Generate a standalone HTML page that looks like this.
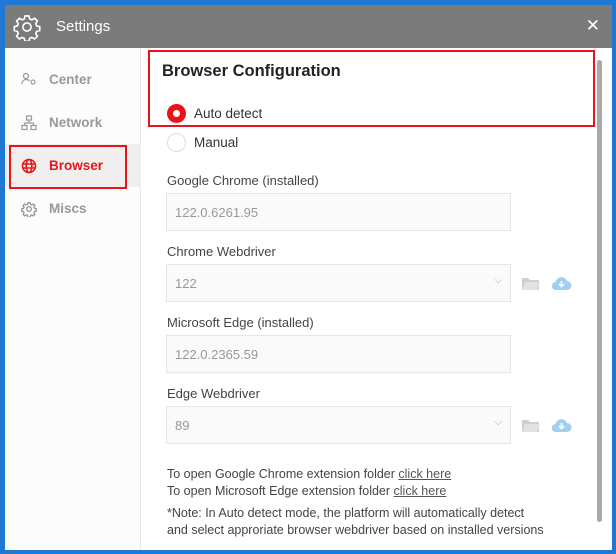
<!DOCTYPE html>
<html><head><meta charset="utf-8"><style>
*{margin:0;padding:0;box-sizing:border-box}
body{width:616px;height:554px;background:#1e78d4;font-family:"Liberation Sans",sans-serif;position:relative;overflow:hidden}
.win{position:absolute;left:5px;top:5px;width:607px;height:545px;background:#fff}
.title{height:43px;background:#7b7b7b;color:#fff;position:relative}
.title span{position:absolute;left:51px;top:13px;font-size:15px}
.close{position:absolute;right:12px;top:11px;font-size:17px;color:#fff}
.side{position:absolute;left:0;top:43px;width:136px;bottom:0;background:#fcfcfc;border-right:1px solid #e8e8e8}
.item{position:absolute;left:0;width:136px;height:43px;font-size:13.5px;font-weight:bold;color:#999}
.item span{position:absolute;left:44px;top:14px}
.item svg{position:absolute;left:16px;top:14px}
.main{position:absolute;left:137px;top:43px;right:0;bottom:0}
.abs{position:absolute}
.lbl{position:absolute;left:25px;font-size:13px;color:#444}
.inp{position:absolute;left:24px;width:345px;height:38px;border:1px solid #e6e6e6;background:#fafafa;font-size:13px;color:#999;padding:11px 8px}
.red{position:absolute;border:2px solid #e8141a}
a{color:#555;text-decoration:underline}
</style></head><body>
<div class="win">
<div class="title">
<svg class="abs" style="left:8px;top:8px" width="28" height="28" viewBox="0 0 24 24" fill="none" stroke="#fff" stroke-width="1.4"><circle cx="12" cy="12" r="3.5"/><path d="M10.3 2.5h3.4l.6 2.6 1.9.8 2.3-1.4 2.4 2.4-1.4 2.3.8 1.9 2.6.6v3.4l-2.6.6-.8 1.9 1.4 2.3-2.4 2.4-2.3-1.4-1.9.8-.6 2.6h-3.4l-.6-2.6-1.9-.8-2.3 1.4-2.4-2.4 1.4-2.3-.8-1.9-2.6-.6v-3.4l2.6-.6.8-1.9-1.4-2.3 2.4-2.4 2.3 1.4 1.9-.8z"/></svg>
<span>Settings</span><div class="close">✕</div></div>
<div class="side">
<div class="item" style="top:10px"><svg width="16" height="14" viewBox="0 0 16 14" fill="none" stroke="#999" stroke-width="1.2"><circle cx="5" cy="4" r="2.5"/><path d="M1 12c0-3 2-4.5 4-4.5s3 .8 3.5 1.5"/><circle cx="12" cy="10" r="2"/></svg><span>Center</span></div>
<div class="item" style="top:53px"><svg width="16" height="16" viewBox="0 0 16 16" fill="none" stroke="#999" stroke-width="1.2"><rect x="5.5" y="1" width="5" height="4"/><path d="M8 5v3M3.5 8h9M3.5 8v2M12.5 8v2"/><rect x="1" y="10.5" width="5" height="4"/><rect x="10" y="10.5" width="5" height="4"/></svg><span>Network</span></div>
<div class="item" style="top:96px;background:#efefef;color:#e8141a"><svg width="16" height="16" viewBox="0 0 16 16" fill="none" stroke="#e8141a" stroke-width="1.6"><circle cx="8" cy="8" r="6.5"/><ellipse cx="8" cy="8" rx="2.8" ry="6.5"/><path d="M1.5 6h13M1.5 10h13"/></svg><span>Browser</span></div>
<div class="item" style="top:139px"><svg width="16" height="16" viewBox="0 0 24 24" fill="none" stroke="#999" stroke-width="2"><circle cx="12" cy="12" r="3.5"/><path d="M10.3 2.5h3.4l.6 2.6 1.9.8 2.3-1.4 2.4 2.4-1.4 2.3.8 1.9 2.6.6v3.4l-2.6.6-.8 1.9 1.4 2.3-2.4 2.4-2.3-1.4-1.9.8-.6 2.6h-3.4l-.6-2.6-1.9-.8-2.3 1.4-2.4-2.4 1.4-2.3-.8-1.9-2.6-.6v-3.4l2.6-.6.8-1.9-1.4-2.3 2.4-2.4 2.3 1.4 1.9-.8z"/></svg><span>Miscs</span></div>
</div>
<div class="red" style="left:4px;top:140px;width:118px;height:44px"></div>
<div class="main">
<div class="abs" style="left:20px;top:14px;font-size:16.5px;font-weight:bold;color:#222">Browser Configuration</div>
<div class="abs" style="left:25px;top:56px;width:19px;height:19px;border-radius:50%;background:#e8141a"><div style="position:absolute;left:6px;top:6px;width:7px;height:7px;border-radius:50%;background:#fff"></div></div>
<div class="abs" style="left:52px;top:58px;font-size:13.5px;color:#333">Auto detect</div>
<div class="abs" style="left:25px;top:85px;width:19px;height:19px;border-radius:50%;border:1.5px solid #ddd"></div>
<div class="abs" style="left:52px;top:87px;font-size:13.5px;color:#333">Manual</div>
<div class="lbl" style="top:125px">Google Chrome (installed)</div>
<div class="inp" style="top:145px">122.0.6261.95</div>
<div class="lbl" style="top:196px">Chrome Webdriver</div>
<div class="inp" style="top:216px">122<span style="position:absolute;right:8px;top:10px;font-size:10px;color:#aaa">⌵</span></div>
<svg class="abs" style="left:379px;top:228px" width="20" height="16" viewBox="0 0 20 16"><path d="M1 2h6l2 2h9v10H1z" fill="#cfcfcf"/><path d="M1 14l3-8h15l-3 8z" fill="#e2e2e2"/></svg>
<svg class="abs" style="left:409px;top:228px" width="21" height="15" viewBox="0 0 21 15"><path d="M5 14a4 4 0 0 1-.5-8A6 6 0 0 1 16 5a4.5 4.5 0 0 1 0 9z" fill="#9fd0ee"/><path d="M10.5 5v5M8 8l2.5 2.5L13 8" stroke="#fff" stroke-width="1.6" fill="none"/></svg>
<div class="lbl" style="top:267px">Microsoft Edge (installed)</div>
<div class="inp" style="top:287px">122.0.2365.59</div>
<div class="lbl" style="top:338px">Edge Webdriver</div>
<div class="inp" style="top:358px">89<span style="position:absolute;right:8px;top:10px;font-size:10px;color:#aaa">⌵</span></div>
<svg class="abs" style="left:379px;top:370px" width="20" height="16" viewBox="0 0 20 16"><path d="M1 2h6l2 2h9v10H1z" fill="#cfcfcf"/><path d="M1 14l3-8h15l-3 8z" fill="#e2e2e2"/></svg>
<svg class="abs" style="left:409px;top:370px" width="21" height="15" viewBox="0 0 21 15"><path d="M5 14a4 4 0 0 1-.5-8A6 6 0 0 1 16 5a4.5 4.5 0 0 1 0 9z" fill="#9fd0ee"/><path d="M10.5 5v5M8 8l2.5 2.5L13 8" stroke="#fff" stroke-width="1.6" fill="none"/></svg>
<div class="abs" style="left:25px;top:418px;font-size:12.5px;color:#444;line-height:17px;width:430px">To open Google Chrome extension folder <a>click here</a><br>To open Microsoft Edge extension folder <a>click here</a></div>
<div class="abs" style="left:25px;top:457px;font-size:12.5px;color:#444;line-height:17px;width:420px">*Note: In Auto detect mode, the platform will automatically detect<br>and select approriate browser webdriver based on installed versions</div>
<div class="abs" style="left:455px;top:12px;width:5px;height:462px;background:#a9a9a9;border-radius:3px"></div>
</div>
<div class="red" style="left:143px;top:45px;width:447px;height:77px"></div>
</div>
</body></html>
